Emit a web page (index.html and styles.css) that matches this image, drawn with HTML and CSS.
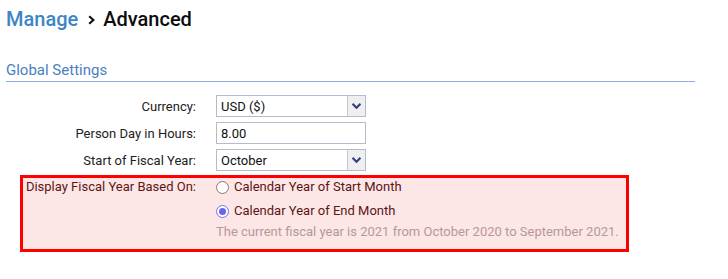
FILE: index.html
```html
<!DOCTYPE html>
<html lang="en">
<head>
<meta charset="utf-8">
<title>Manage › Advanced</title>
<link rel="stylesheet" href="styles.css">
</head>
<body>
<div class="page">
  <h1 class="title"><span class="crumb">Manage</span><svg class="sep" width="7" height="10" viewBox="0 0 7 10"><path d="M1.2 1.2 L5.4 5 L1.2 8.8" fill="none" stroke="#111" stroke-width="2.2"/></svg><span class="current">Advanced</span></h1>

  <h2 class="section">Global Settings</h2>

  <div class="form">
    <div class="row">
      <label class="label">Currency:</label>
      <div class="select">
        <span class="value">USD ($)</span>
        <span class="arrow"><svg width="9" height="6" viewBox="0 0 9 6"><path d="M0.5 0.8 L4.5 4.8 L8.5 0.8" fill="none" stroke="#34447a" stroke-width="2.2"/></svg></span>
      </div>
    </div>
    <div class="row">
      <label class="label">Person Day in Hours:</label>
      <div class="input"><span class="value">8.00</span></div>
    </div>
    <div class="row">
      <label class="label">Start of Fiscal Year:</label>
      <div class="select">
        <span class="value">October</span>
        <span class="arrow"><svg width="9" height="6" viewBox="0 0 9 6"><path d="M0.5 0.8 L4.5 4.8 L8.5 0.8" fill="none" stroke="#34447a" stroke-width="2.2"/></svg></span>
      </div>
    </div>

    <div class="highlight">
      <label class="label hl-label">Display Fiscal Year Based On:</label>
      <div class="options">
        <div class="option opt-first"><span class="radio"></span><span>Calendar Year of Start Month</span></div>
        <div class="option opt-second"><span class="radio checked"></span><span>Calendar Year of End Month</span></div>
        <div class="hint">The current fiscal year is 2021 from October 2020 to September 2021.</div>
      </div>
    </div>
  </div>
</div>
</body>
</html>
```

FILE: styles.css
```css
html, body {
  margin: 0;
  padding: 0;
  background: #ffffff;
}

body {
  font-family: Roboto, "Liberation Sans", Arial, sans-serif;
  color: #1a1a1a;
}

.page {
  padding-left: 6px;
  padding-top: 7px;
}

.title {
  margin: 0;
  font-size: 20px;
  font-weight: 500;
  line-height: 24px;
  display: flex;
  align-items: baseline;
}

.crumb {
  color: #3d86c6;
}

.sep {
  margin: 0 8px 0 10px;
  position: relative;
  top: -1px;
}

.current {
  color: #0d0d0d;
}

.section {
  margin: 30px 0 0 0;
  width: 689px;
  font-size: 15px;
  font-weight: 400;
  line-height: 18px;
  color: #4a7fbf;
  padding-bottom: 2px;
  border-bottom: 1px solid #8fb0df;
}

.form {
  margin-top: 13px;
}

.row {
  display: flex;
  align-items: center;
  height: 22px;
  margin-bottom: 5px;
}

.label {
  width: 190px;
  margin-right: 20px;
  text-align: right;
  font-size: 13px;
  color: #222222;
  flex-shrink: 0;
}

.select,
.input {
  box-sizing: border-box;
  width: 150px;
  height: 22px;
  border: 1px solid #b6bacb;
  background: #ffffff;
  display: flex;
  align-items: stretch;
  font-size: 13px;
  color: #111111;
}

.value {
  flex: 1;
  padding-left: 4px;
  display: flex;
  align-items: center;
}

.arrow {
  width: 17px;
  border-left: 1px solid #c9c9cf;
  background: #efeff1;
  display: flex;
  align-items: center;
  justify-content: center;
}

.highlight {
  box-sizing: border-box;
  margin-left: 14px;
  margin-top: -1px;
  width: 609px;
  border: 3px solid #ff0000;
  background: #fde6e6;
  display: flex;
  align-items: flex-start;
  padding-bottom: 9px;
}

.hl-label {
  width: 173px;
  line-height: 17px;
  color: #5c1616;
}

.options {
  font-size: 13px;
  line-height: 17px;
  color: #5c1616;
}

.option {
  display: flex;
  align-items: center;
  height: 17px;
}

.opt-second {
  margin-top: 7px;
}

.radio {
  box-sizing: border-box;
  width: 13px;
  height: 13px;
  border-radius: 50%;
  border: 1px solid #8d7474;
  background: #ffffff;
  margin-right: 5px;
  position: relative;
  top: 1px;
}

.radio.checked {
  border-color: #7a6cf2;
  background: #ffffff;
}

.radio.checked::after {
  content: "";
  position: absolute;
  left: 2px;
  top: 2px;
  width: 7px;
  height: 7px;
  border-radius: 50%;
  background: #6d62ec;
}

.hint {
  margin-top: 4px;
  color: #b69898;
}
```
